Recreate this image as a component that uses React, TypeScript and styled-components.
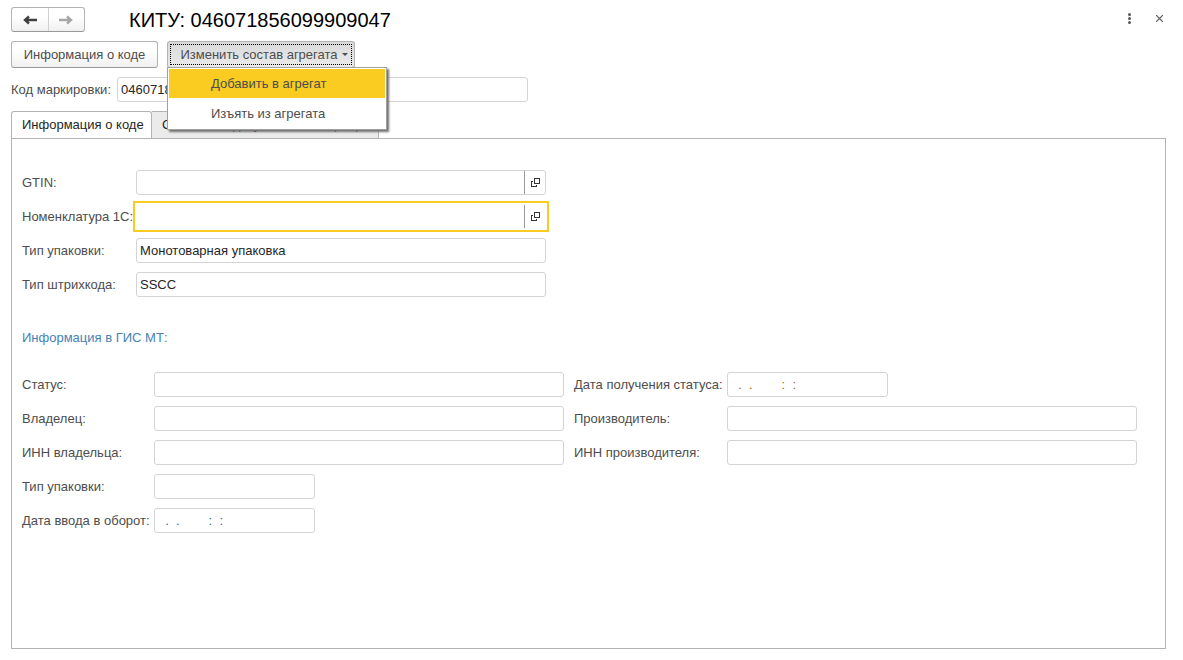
import React from 'react';
import styled, { createGlobalStyle, css } from 'styled-components';

const GlobalStyle = createGlobalStyle`
  *, *::before, *::after { box-sizing: border-box; }
  body {
    margin: 0;
    background: #fff;
    color: #4d4d4d;
    font: 13px/16px "Liberation Sans", Arial, sans-serif;
  }
  button, input { font: inherit; color: inherit; }
`;

const Page = styled.main`
  display: flex;
  flex-direction: column;
  min-height: 100vh;
  padding: 7px 17px 11px 11px;
`;

const Header = styled.header`
  display: flex;
  align-items: center;
  height: 25px;
  margin-right: -8px;
`;

const raised = css`
  border: 1px solid #b3b3b3;
  border-bottom-color: #999;
  border-radius: 3px;
  background: linear-gradient(#fff 40%, #f0f0f0);
`;

const NavGroup = styled.nav`
  ${raised}
  display: flex;
  width: 74px;
  height: 25px;
`;

const NavButton = styled.button`
  display: flex;
  flex: 1;
  align-items: center;
  justify-content: center;
  padding: 0;
  border: 0;
  background: none;
  color: #404040;
  & + & { border-left: 1px solid #d0d0d0; }
  &:disabled { color: #a6a6a6; }
`;

const Title = styled.h1`
  flex: 1;
  margin: 0 0 0 44px;
  color: #000;
  font-size: 20px;
  font-weight: 400;
  line-height: 24px;
`;

const WindowButton = styled.button`
  display: flex;
  align-items: center;
  justify-content: center;
  width: 30px;
  height: 23px;
  padding: 0;
  border: 0;
  background: none;
  color: #595959;
`;

const WindowButtons = styled.div`
  display: flex;
  align-self: flex-start;
`;

const Toolbar = styled.div`
  display: flex;
  gap: 9px;
  margin-top: 9px;
`;

const CommandButton = styled.button<{ $open?: boolean }>`
  ${raised}
  display: flex;
  align-items: center;
  justify-content: center;
  gap: 4px;
  width: ${p => (p.$open ? 188 : 147)}px;
  height: 27px;
  padding: 0;
  white-space: nowrap;
  ${p => p.$open && css`
    padding-left: 6px;
    background: linear-gradient(#d9d9d9, #ebebeb);
    outline: 1px dotted #000;
    outline-offset: -4px;
  `}
`;

const MenuAnchor = styled.div`
  position: relative;
`;

const Menu = styled.div`
  position: absolute;
  z-index: 1;
  top: 26px;
  left: 0;
  width: 220px;
  padding: 1px;
  border: 1px solid #a0a0a0;
  background: #fff;
  box-shadow: 2px 2px 2px #707070;
`;

const MenuItem = styled.button<{ $active?: boolean }>`
  display: block;
  width: 100%;
  height: 29px;
  padding: 0 0 0 42px;
  border: 0;
  background: ${p => (p.$active ? '#facb20' : '#fff')};
  text-align: left;
  & + & { margin-top: 1px; }
`;

const CodeRow = styled.div`
  display: flex;
  align-items: center;
  margin-top: 9px;
`;

const CodeLabel = styled.label`
  width: 106px;
  white-space: nowrap;
`;

const box = css`
  height: 25px;
  border: 1px solid #d4d4d4;
  border-radius: 3px;
  background: #fff;
`;

const TextBox = styled.input<{ $short?: boolean }>`
  ${box}
  width: ${p => (p.$short ? 161 : 411)}px;
  padding: 0 3px;
  color: #262626;
  outline: 0;
`;

const DateBox = styled(TextBox)<{ $tone: string }>`
  color: ${p => p.$tone};
`;

const Picker = styled.div<{ $focused?: boolean }>`
  ${box}
  display: flex;
  width: 410px;
  ${p => p.$focused && css`
    border-color: transparent;
    border-radius: 0;
    outline: 2px solid #facb20;
    outline-offset: 1px;
  `}
`;

const PickerInput = styled.input`
  flex: 1;
  min-width: 0;
  padding: 0 3px;
  border: 0;
  background: none;
  outline: 0;
`;

const PickerButton = styled.button`
  display: flex;
  align-items: center;
  justify-content: center;
  width: 21px;
  padding: 0;
  border: 0;
  border-left: 1px solid #999;
  background: none;
  color: #333;
`;

const Tabs = styled.div`
  display: flex;
  align-items: flex-end;
  margin-top: 9px;
`;

const Tab = styled.button<{ $active?: boolean }>`
  height: 27px;
  padding: 0 10px;
  border: 1px solid #b3b3b3;
  border-bottom: 0;
  background: #ebebeb;
  color: #262626;
  text-align: left;
  white-space: nowrap;
  ${p => p.$active ? css`
    width: 141px;
    height: 28px;
    margin-bottom: -1px;
    padding-bottom: 2px;
    border-radius: 3px 3px 0 0;
    background: #fff;
  ` : css`
    width: 227px;
    border-left: 0;
  `}
`;

const Panel = styled.section`
  flex: 1;
  padding: 31px 10px;
  border: 1px solid #b3b3b3;
`;

const Fields = styled.div<{ $columns: string }>`
  display: grid;
  grid-template-columns: ${p => p.$columns};
  grid-auto-rows: 25px;
  row-gap: 9px;
  align-items: center;
  justify-content: start;
  white-space: nowrap;

  & > ${TextBox} { width: 410px; }
`;

const ShortCell = styled.div`
  display: flex;
`;

const PairLabel = styled.label`
  padding-left: 10px;
`;

const RowStartLabel = styled.label`
  grid-column: 1;
`;

const SectionTitle = styled.h2`
  margin: 33px 0 26px;
  color: #4682b4;
  font-size: 13px;
  font-weight: 400;
  line-height: 16px;
`;

const Arrow = ({ flip }: { flip?: boolean }) => (
  <svg width="14" height="10" viewBox="0 0 14 10" fill="none" stroke="currentColor" strokeWidth="2" aria-hidden="true">
    <path
      d={flip ? 'M0 5H12M8 1.5L12 5L8 8.5' : 'M14 5H2M6 1.5L2 5L6 8.5'}
      strokeWidth="2.4"
    />
  </svg>
);

const OpenIcon = () => (
  <svg width="9" height="9" viewBox="0 0 9 9" fill="none" stroke="currentColor" shapeRendering="crispEdges" aria-hidden="true">
    <path d="M3.5 0.5H8.5V5.5H3.5ZM2 3.5H0.5V8.5H5.5V7" />
  </svg>
);

const EMPTY_DATE = '  .  .        :  :  ';

export default function App() {
  return (
    <>
      <GlobalStyle />
      <Page>
        <Header>
          <NavGroup aria-label="Навигация">
            <NavButton aria-label="Назад"><Arrow /></NavButton>
            <NavButton aria-label="Вперед" disabled><Arrow flip /></NavButton>
          </NavGroup>
          <Title>КИТУ: 046071856099909047</Title>
          <WindowButtons>
            <WindowButton aria-label="Ещё">
              <svg width="3" height="11" viewBox="0 0 3 11" fill="currentColor" aria-hidden="true">
                <circle cx="1.5" cy="1.5" r="1.5" />
                <circle cx="1.5" cy="5.5" r="1.5" />
                <circle cx="1.5" cy="9.5" r="1.5" />
              </svg>
            </WindowButton>
            <WindowButton aria-label="Закрыть">
              <svg width="7" height="7" viewBox="0 0 7 7" fill="none" stroke="currentColor" strokeWidth="1.2" aria-hidden="true">
                <path d="M0 0L7 7M7 0L0 7" />
              </svg>
            </WindowButton>
          </WindowButtons>
        </Header>

        <Toolbar>
          <CommandButton>Информация о коде</CommandButton>
          <MenuAnchor>
            <CommandButton $open aria-haspopup="menu" aria-expanded="true">
              Изменить состав агрегата
              <svg width="6" height="3" viewBox="0 0 6 3" fill="currentColor" aria-hidden="true">
                <path d="M0 0H6L3 3Z" />
              </svg>
            </CommandButton>
            <Menu role="menu">
              <MenuItem $active role="menuitem">Добавить в агрегат</MenuItem>
              <MenuItem role="menuitem">Изъять из агрегата</MenuItem>
            </Menu>
          </MenuAnchor>
        </Toolbar>

        <CodeRow>
          <CodeLabel htmlFor="code">Код маркировки:</CodeLabel>
          <TextBox id="code" defaultValue="046071856099909047" />
        </CodeRow>

        <Tabs role="tablist">
          <Tab $active role="tab" aria-selected="true">Информация о коде</Tab>
          <Tab role="tab" aria-selected="false">Связанные документы на сервере</Tab>
        </Tabs>

        <Panel role="tabpanel">
          <Fields $columns="114px 410px">
            <label htmlFor="gtin">GTIN:</label>
            <Picker>
              <PickerInput id="gtin" />
              <PickerButton aria-label="Открыть GTIN"><OpenIcon /></PickerButton>
            </Picker>
            <label htmlFor="item">Номенклатура 1С:</label>
            <Picker $focused>
              <PickerInput id="item" />
              <PickerButton aria-label="Открыть номенклатуру"><OpenIcon /></PickerButton>
            </Picker>
            <label htmlFor="pack">Тип упаковки:</label>
            <TextBox id="pack" defaultValue="Монотоварная упаковка" />
            <label htmlFor="barcode">Тип штрихкода:</label>
            <TextBox id="barcode" defaultValue="SSCC" />
          </Fields>

          <SectionTitle>Информация в ГИС МТ:</SectionTitle>

          <Fields $columns="132px 410px 163px 410px">
            <label htmlFor="status">Статус:</label>
            <TextBox id="status" />
            <PairLabel htmlFor="statusDate">Дата получения статуса:</PairLabel>
            <ShortCell><DateBox $short $tone="#a8650c" id="statusDate" defaultValue={EMPTY_DATE} /></ShortCell>
            <label htmlFor="owner">Владелец:</label>
            <TextBox id="owner" />
            <PairLabel htmlFor="maker">Производитель:</PairLabel>
            <TextBox id="maker" />
            <label htmlFor="ownerInn">ИНН владельца:</label>
            <TextBox id="ownerInn" />
            <PairLabel htmlFor="makerInn">ИНН производителя:</PairLabel>
            <TextBox id="makerInn" />
            <RowStartLabel htmlFor="gisPack">Тип упаковки:</RowStartLabel>
            <ShortCell><TextBox $short id="gisPack" /></ShortCell>
            <RowStartLabel htmlFor="releaseDate">Дата ввода в оборот:</RowStartLabel>
            <ShortCell><DateBox $short $tone="#2f6f88" id="releaseDate" defaultValue={EMPTY_DATE} /></ShortCell>
          </Fields>
        </Panel>
      </Page>
    </>
  );
}
